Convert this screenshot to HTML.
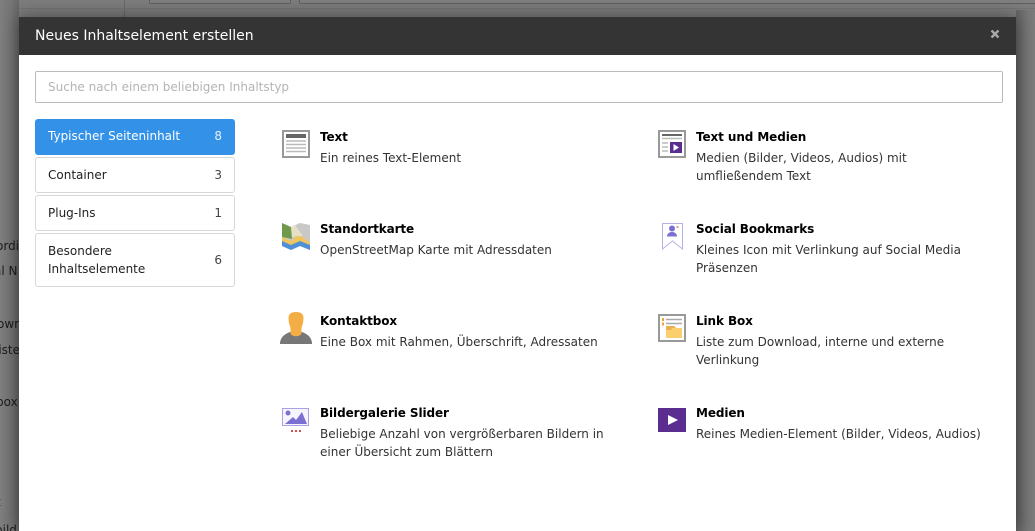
<!DOCTYPE html>
<html style="width:1035px;height:531px;overflow:hidden"><head><meta charset="utf-8"><style>
html,body{margin:0;padding:0}
body{width:1035px;height:531px;overflow:hidden;position:relative;background:#7d7d7d;font-family:"DejaVu Sans","Liberation Sans",sans-serif;font-size:12px;color:#333}
.abs{position:absolute}
.bgt{position:absolute;color:#1c1c1c;font-size:12px;white-space:nowrap;line-height:16px}
.modal{position:absolute;left:19px;top:17px;width:997px;height:514px;background:#fff;box-shadow:0 0 18px rgba(0,0,0,.45)}
.head{position:absolute;left:0;top:0;width:997px;height:38px;background:#343434;color:#fff;font-size:14px;line-height:38px;text-indent:16px}
.x{position:absolute;left:970px;top:11px;width:12px;height:12px}
.search{position:absolute;left:16px;top:54px;width:966px;height:30px;border:1px solid #bbb;border-radius:2px;color:#b4b4b4;font-size:12px;line-height:30px;text-indent:12px}
.nav{position:absolute;left:16px;width:198px;border:1px solid #d7d7d7;border-radius:3px;box-sizing:content-box;color:#222;line-height:18px}
.nav span{position:absolute;left:12px;white-space:nowrap}
.nav b{position:absolute;right:12px;font-weight:normal;color:#444}
.it{position:absolute;width:340px}
.it h4{margin:0;padding-top:1px;font-size:12px;line-height:18px;color:#000;font-weight:bold;letter-spacing:-.1px}
.it p{margin:3px 0 0;line-height:18px;color:#333;white-space:nowrap}
.ic{position:absolute}
</style></head><body>
<div class="abs" style="left:124px;top:0;width:1px;height:17px;background:#6a6a6a"></div>
<div class="abs" style="left:0;top:8px;width:1035px;height:1px;background:#747474"></div>
<div class="abs" style="left:149px;top:-6px;width:140px;height:8px;border:1px solid #5f5f5f;border-radius:2px;background:#808080"></div>
<div class="abs" style="left:299px;top:-6px;width:736px;height:8px;border:1px solid #5f5f5f;border-radius:2px;background:#808080"></div>
<div class="abs" style="left:0;top:0;width:19px;height:531px;background:linear-gradient(90deg,#7f7f7f,#757575 60%,#686868)"></div>
<div class="abs" style="left:1016px;top:10px;width:19px;height:521px;background:linear-gradient(90deg,#656565,#777 60%,#7d7d7d)"></div>
<div class="bgt" style="left:-4px;top:238px">ordi</div>
<div class="bgt" style="left:-6px;top:263px">al N</div>
<div class="bgt" style="left:-3px;top:316px">owr</div>
<div class="bgt" style="left:-5px;top:342px">liste</div>
<div class="bgt" style="left:-4px;top:394px">box</div>
<div class="bgt" style="left:-4px;top:494px">t</div>
<div class="bgt" style="left:-5px;top:522px">bild</div>

<div class="modal">
<div class="head">Neues Inhaltselement erstellen</div>
<svg class="x" viewBox="0 0 12 12"><path d="M2.500 2.500L9.500 9.500M9.500 2.500L2.500 9.500" stroke="#a8a8a8" stroke-width="2.400" fill="none"/></svg>
<div class="search">Suche nach einem beliebigen Inhaltstyp</div>

<div class="nav" style="top:102px;height:34px;background:#3391e8;border-color:#3391e8;color:#fff"><span style="top:7px">Typischer Seiteninhalt</span><b style="top:7px;color:#e4f0fb">8</b></div>
<div class="nav" style="top:140px;height:34px"><span style="top:8px">Container</span><b style="top:8px">3</b></div>
<div class="nav" style="top:178px;height:34px"><span style="top:8px">Plug-Ins</span><b style="top:8px">1</b></div>
<div class="nav" style="top:216px;height:52px"><span style="top:8px">Besondere<br>Inhaltselemente</span><b style="top:17px">6</b></div>

<div class="it" style="left:301px;top:110px"><h4>Text</h4><p>Ein reines Text-Element</p></div>
<div class="it" style="left:677px;top:110px"><h4>Text und Medien</h4><p>Medien (Bilder, Videos, Audios) mit<br>umfließendem Text</p></div>
<div class="it" style="left:301px;top:202px"><h4>Standortkarte</h4><p>OpenStreetMap Karte mit Adressdaten</p></div>
<div class="it" style="left:677px;top:202px"><h4>Social Bookmarks</h4><p>Kleines Icon mit Verlinkung auf Social Media<br>Präsenzen</p></div>
<div class="it" style="left:301px;top:294px"><h4>Kontaktbox</h4><p>Eine Box mit Rahmen, Überschrift, Adressaten</p></div>
<div class="it" style="left:677px;top:294px"><h4>Link Box</h4><p>Liste zum Download, interne und externe<br>Verlinkung</p></div>
<div class="it" style="left:301px;top:386px"><h4>Bildergalerie Slider</h4><p>Beliebige Anzahl von vergrößerbaren Bildern in<br>einer Übersicht zum Blättern</p></div>
<div class="it" style="left:677px;top:386px"><h4>Medien</h4><p>Reines Medien-Element (Bilder, Videos, Audios)</p></div>
</div>

<!-- Text icon -->
<svg class="ic" style="left:282px;top:130px" width="28" height="28" viewBox="0 0 28 28"><rect x="1" y="1" width="26" height="26" fill="#fff" stroke="#999" stroke-width="2"/><rect x="4" y="4" width="20" height="4" fill="#666"/><path d="M4 11h20M4 14.500h20M4 18h20M4 21.500h20" stroke="#bbb" stroke-width="1.600"/></svg>
<!-- Map icon -->
<svg class="ic" style="left:282px;top:222px" width="28" height="28" viewBox="0 0 28 28"><path d="M0 1L9 5 18 1 28 3V28L18 24 9 28 0 24Z" fill="#c8c8c8"/><path d="M0 1L9 5 10 17 0 15Z" fill="#6f9a4c"/><path d="M9 5L13 3 21 14 10 15Z" fill="#e6dfc6"/><path d="M0 15L9 19 14 14 21 15 28 21V24L18 20 9 24 0 20Z" fill="#eec55f"/><path d="M0 19L9 23 18 19 28 23V28L18 24 9 28 0 24Z" fill="#4f90d6"/></svg>
<!-- Contact icon -->
<svg class="ic" style="left:280px;top:312px" width="32" height="33" viewBox="0 0 32 33"><path d="M0 32C0 25 5 22 10 20H22C27 22 32 25 32 32Z" fill="#777"/><path d="M8.500 6C8.500 2 11 0 16 0S23.500 2 23.500 6C23.500 11 22 14 21.500 16V22C19 25 13 25 10.500 22V16C10 14 8.500 11 8.500 6Z" fill="#f2ae45"/></svg>
<!-- Gallery icon -->
<svg class="ic" style="left:282px;top:408px" width="28" height="26" viewBox="0 0 28 26"><rect x=".5" y=".5" width="26" height="17" fill="#f6f5ff" stroke="#a9a2e0"/><circle cx="6" cy="5" r="2.500" fill="#7a70d2"/><path d="M3 16L11 9 14 12 20 4 25 16Z" fill="#7a70d2"/><path d="M9 23h2M13 23h2M17 23h2" stroke="#d0504f" stroke-width="2"/></svg>
<!-- Text & media -->
<svg class="ic" style="left:658px;top:130px" width="28" height="28" viewBox="0 0 28 28"><rect x="1" y="1" width="26" height="26" fill="#fff" stroke="#999" stroke-width="2"/><rect x="4" y="4" width="20" height="2" fill="#666"/><path d="M4 8.500h20M4 13h6M4 17h6M4 21h6" stroke="#bbb" stroke-width="1.600"/><rect x="12" y="12" width="12" height="11" fill="#5c2d91"/><path d="M15.500 14L21 17.500 15.500 21Z" fill="#fff"/></svg>
<!-- Social -->
<svg class="ic" style="left:661px;top:222px" width="24" height="28" viewBox="0 0 24 28"><path d="M1.500 1.500H21.500V27L11.500 19 1.500 27Z" fill="#fff" stroke="#b5b0e6"/><circle cx="11" cy="6.500" r="3" fill="#7a70d2"/><path d="M6 14.500C6 11 9 10 11 10S16 11 16 14.500Z" fill="#7a70d2"/><rect x="15.500" y="4" width="2" height="2" fill="#e79a8f"/></svg>
<!-- Link box -->
<svg class="ic" style="left:658px;top:314px" width="28" height="28" viewBox="0 0 28 28"><rect x="1" y="1" width="26" height="26" fill="#fff" stroke="#999" stroke-width="2"/><path d="M8 5.500h16M8 9.500h16" stroke="#aaa" stroke-width="1.600"/><rect x="4" y="4" width="2" height="3" fill="#eda42e"/><rect x="4" y="8.500" width="2" height="3" fill="#eda42e"/><path d="M8 12H16L18 14H24V24H8Z" fill="#fbcf6d"/><path d="M8 12H16L18 14H14L13 16H8Z" fill="#e9b050"/></svg>
<!-- Media -->
<svg class="ic" style="left:658px;top:408px" width="28" height="24" viewBox="0 0 28 24"><rect width="28" height="24" fill="#5c2d91"/><path d="M10 7L20 12 10 17Z" fill="#fff"/></svg>
</body></html>
